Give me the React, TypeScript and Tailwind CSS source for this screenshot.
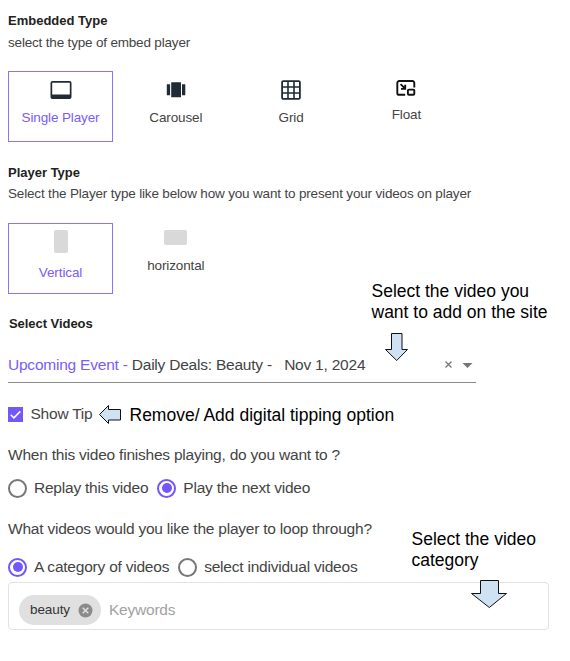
import type { ReactNode } from "react";

const sans = "font-['Liberation_Sans',Arial,sans-serif]";
const body = "text-[15.5px] tracking-[-0.22px]";
const note = "absolute whitespace-nowrap text-[17.5px] leading-[21px] text-black";

function SingleIcon() {
  return (
    <svg width="22" height="18" viewBox="0 0 22 18">
      <path fillRule="evenodd" fill="#212b36" d="M2.3 0h17.4A2 2 0 0 1 21.5 2v14a2 2 0 0 1-1.8 2H2.3A2 2 0 0 1 .5 16V2A2 2 0 0 1 2.3 0ZM2.2 1.7v11.8h17.6V1.7Z" />
    </svg>
  );
}

function CarouselIcon() {
  return (
    <svg width="20" height="16" viewBox="0 0 20 16" fill="#212b36">
      <rect x="5.2" y="0.3" width="9.8" height="15" rx="0.5" />
      <rect x="0.8" y="2.3" width="3.3" height="11" rx="0.3" />
      <rect x="16" y="2.3" width="3.3" height="11" rx="0.3" />
    </svg>
  );
}

function GridIcon() {
  return (
    <svg width="20" height="20" viewBox="0 0 20 20" fill="none" stroke="#212b36" strokeWidth="1.8">
      <rect x="1.1" y="1.1" width="17.8" height="17.8" rx="1.2" />
      <path d="M7 1v18M13 1v18M1 7h18M1 13h18" strokeWidth="1.6" />
    </svg>
  );
}

function FloatIcon() {
  return (
    <svg width="20" height="16" viewBox="0 0 20 16" fill="none" stroke="#111" strokeWidth="1.9">
      <path d="M18.3 7.4V2.9a1.9 1.9 0 0 0-1.9-1.9H3.2a1.9 1.9 0 0 0-1.9 1.9v10a1.9 1.9 0 0 0 1.9 1.9H9.2" />
      <rect x="11.9" y="9.6" width="6.4" height="5.2" rx="1" />
      <path d="M4.6 4.2l3.9 3.9M9.2 4.7v4.2H5" />
    </svg>
  );
}

function Card({ icon, label, selected, offset }: { icon: ReactNode; label: string; selected?: boolean; offset: string }) {
  return (
    <div
      className={`flex h-[71px] w-[105px] flex-col items-center border text-[13.5px] leading-5 tracking-[-0.12px] ${offset} ${
        selected ? "border-[#8b74fb] text-[#7a5cfa]" : "border-transparent text-[#444]"
      }`}
    >
      {icon}
      <span>{label}</span>
    </div>
  );
}

function Radio({ checked, children }: { checked?: boolean; children: ReactNode }) {
  return (
    <label className="flex items-center gap-[7px]">
      <span className={`flex h-[19px] w-[19px] items-center justify-center rounded-full border-2 ${checked ? "border-[#7357fb]" : "border-[#777]"}`}>
        {checked && <span className="h-[10px] w-[10px] rounded-full bg-[#7357fb]" />}
      </span>
      <span>{children}</span>
    </label>
  );
}

export default function App() {
  return (
    <main className={`relative h-[661px] w-[570px] overflow-hidden bg-white pl-[8px] pt-[11px] text-[#444] ${sans}`}>
      <h2 className="h-5 text-[13px] font-bold leading-5 text-[#222]">Embedded Type</h2>
      <p className="mt-[2px] h-5 text-[13.5px] leading-5 tracking-[-0.18px]">select the type of embed player</p>
      <div className="mt-[18px] flex gap-[10.3px]">
        <Card selected offset="pt-[9px]" label="Single Player" icon={<span className="mb-[9px]"><SingleIcon /></span>} />
        <Card offset="pt-[10px]" label="Carousel" icon={<span className="mb-[10px]"><CarouselIcon /></span>} />
        <Card offset="pt-[8px]" label="Grid" icon={<span className="mb-[8px]"><GridIcon /></span>} />
        <Card offset="pt-[8px]" label="Float" icon={<span className="mb-[9px]"><FloatIcon /></span>} />
      </div>
      <h2 className="mt-[21px] h-5 text-[13px] font-bold leading-5 text-[#222]">Player Type</h2>
      <p className="mt-[1px] h-5 whitespace-nowrap text-[13.5px] leading-5 tracking-[-0.17px]">Select the Player type like below how you want to present your videos on player</p>
      <div className="mt-[19px] flex gap-[10.3px]">
        <Card selected offset="pt-[6px]" label="Vertical" icon={<span className="mb-[10px] h-[23px] w-[14px] rounded-[2px] bg-[#d9d9d9]" />} />
        <Card offset="pt-[6px]" label="horizontal" icon={<span className="mb-[11px] h-[15px] w-[23px] rounded-[2px] bg-[#d9d9d9]" />} />
      </div>
      <h2 className="mt-[20px] h-5 pl-px text-[13px] font-bold leading-5 tracking-[-0.05px] text-[#222]">Select Videos</h2>
      <div className={`mt-[14px] flex h-[35px] w-[468px] items-center border-b border-[#8c8c8c] ${body}`}>
        <span className="whitespace-pre"><span className="text-[#7a5cfa]">Upcoming Event - </span>Daily Deals: Beauty -   Nov 1, 2024</span>
        <svg className="ml-auto mr-[2px]" width="30" height="10" viewBox="0 0 30 10">
          <path d="M1.5 1.5l6 6M7.5 1.5l-6 6" stroke="#777" strokeWidth="1.3" />
          <path d="M18.5 3h10L23.5 8Z" fill="#757575" />
        </svg>
      </div>
      <label className={`mt-[20px] flex h-[22px] items-center gap-[7.5px] ${body}`}>
        <span className="flex h-[15px] w-[15px] items-center justify-center bg-[#7357fb]">
          <svg width="15" height="15" viewBox="0 0 15 15"><path d="M2.7 7.8l3.2 3.1 6.4-6.5" fill="none" stroke="#fff" strokeWidth="1.5" /></svg>
        </span>
        <span className="-mt-px">Show Tip</span>
      </label>
      <p className={`mt-[19px] h-[22px] leading-[22px] ${body}`}>When this video finishes playing, do you want to ?</p>
      <div className={`mt-[11px] flex h-[22px] gap-[9px] ${body}`}>
        <Radio>Replay this video</Radio>
        <Radio checked>Play the next video</Radio>
      </div>
      <p className={`mt-[19px] h-[22px] leading-[22px] ${body}`}>What videos would you like the player to loop through?</p>
      <div className={`mt-[16px] flex h-[22px] gap-[9px] ${body}`}>
        <Radio checked>A category of videos</Radio>
        <Radio>select individual videos</Radio>
      </div>
      <div className="mt-[4px] flex h-[48px] w-[541px] items-center rounded-[4px] border border-[#e2e2e2] pl-[10px] pt-[8px]">
        <span className="flex h-[30px] w-[82px] items-center rounded-full bg-[#e0e0e0] pl-[11px] text-[13.5px] tracking-[-0.1px] text-[#333]">
          beauty
          <svg className="ml-[8px]" width="15" height="15" viewBox="0 0 15 15">
            <circle cx="7.5" cy="7.5" r="7" fill="#8b8b8b" />
            <path d="M4.7 4.7l5.6 5.6M10.3 4.7l-5.6 5.6" stroke="#e0e0e0" strokeWidth="1.5" />
          </svg>
        </span>
        <span className={`ml-2 text-[#a2a2a2] ${body}`}>Keywords</span>
      </div>

      <p className={`left-[371.5px] top-[281px] ${note}`}>Select the video you<br />want to add on the site</p>
      <svg className="absolute left-[384px] top-[332px]" width="26" height="30" viewBox="0 0 26 30"><path d="M7.5 1.5h10.5v16h5.5L12.7 28.5 1.5 17.5h6Z" fill="#cfe2f3" stroke="#111" /></svg>
      <p className={`left-[129.5px] top-[405px] ${note}`}>Remove/ Add digital tipping option</p>
      <svg className="absolute left-[98px] top-[404px]" width="25" height="22" viewBox="0 0 25 22"><path d="M1.5 10.5L10.5 1.5v4h12v10.5h-12v3.5Z" fill="#cfe2f3" stroke="#111" /></svg>
      <p className={`left-[411.5px] top-[529px] ${note}`}>Select the video<br />category</p>
      <svg className="absolute left-[470px] top-[579px]" width="38" height="30" viewBox="0 0 38 30"><path d="M10.5 1.5h18v13h8L19.3 28.5 1.5 14.5h9Z" fill="#cfe2f3" stroke="#111" /></svg>
    </main>
  );
}
